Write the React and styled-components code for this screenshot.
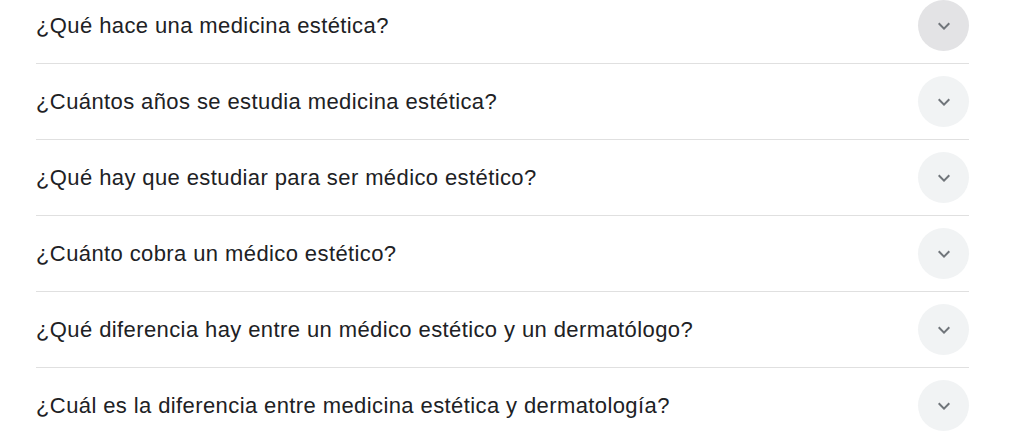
import styled, { createGlobalStyle } from 'styled-components';

const GlobalStyle = createGlobalStyle`
  body {
    margin: 0;
    background: #fff;
    font-family: Arial, "Liberation Sans", sans-serif;
  }
`;

const List = styled.div`
  width: 933px;
  margin: -12px 0 0 36px;
`;

const Row = styled.div`
  height: 75px;
  display: flex;
  align-items: center;
  justify-content: space-between;
  border-bottom: 1px solid #e0e0e0;

  &:last-child {
    border-bottom: none;
  }
`;

const Question = styled.span`
  font-size: 22px;
  letter-spacing: 0.4px;
  line-height: 26px;
  color: #202124;
`;

const Toggle = styled.div`
  width: 51px;
  height: 51px;
  border-radius: 50%;
  flex-shrink: 0;
  display: flex;
  align-items: center;
  justify-content: center;
  background: ${(p) => (p.$active ? '#e3e3e5' : '#f1f3f4')};
`;

const questions = [
  '¿Qué hace una medicina estética?',
  '¿Cuántos años se estudia medicina estética?',
  '¿Qué hay que estudiar para ser médico estético?',
  '¿Cuánto cobra un médico estético?',
  '¿Qué diferencia hay entre un médico estético y un dermatólogo?',
  '¿Cuál es la diferencia entre medicina estética y dermatología?',
];

function Chevron() {
  return (
    <svg width="24" height="24" viewBox="0 0 24 24" fill="#70757a">
      <path d="M7.41 8.59L12 13.17l4.59-4.58L18 10l-6 6-6-6 1.41-1.41z" />
    </svg>
  );
}

export default function App() {
  return (
    <>
      <GlobalStyle />
      <List>
        {questions.map((q, i) => (
          <Row key={q}>
            <Question>{q}</Question>
            <Toggle $active={i === 0}>
              <Chevron />
            </Toggle>
          </Row>
        ))}
      </List>
    </>
  );
}
